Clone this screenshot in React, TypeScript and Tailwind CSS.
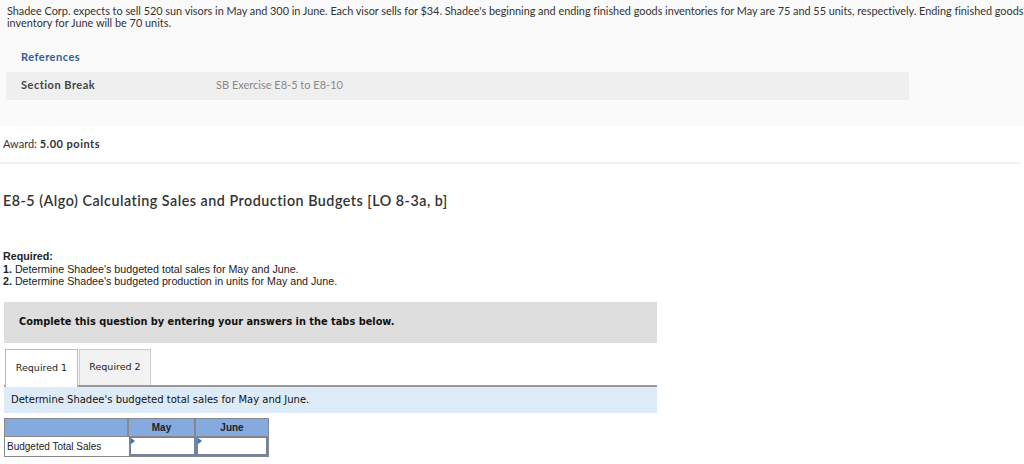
import React from "react";

const proxima = { fontFamily: '"Lato", "Open Sans", sans-serif' };

const CellInput: React.FC = () => (
  <div className="relative h-full w-full border-2 border-t border-[#6f84a8] bg-white">
    <span className="absolute left-0 top-0 h-0 w-0 border-y-[3px] border-l-[4px] border-y-transparent border-l-[#3b6fc4]" />
  </div>
);

export default function App() {
  return (
    <div className="min-h-[464px] w-[1024px] bg-white text-[#333]">
      {/* question stem */}
      <div className="h-[126px] bg-[#fafafa] pt-[5px]" style={proxima}>
        <p className="pl-[7px] text-[10.9px] leading-[12px] whitespace-nowrap tracking-[-0.02px]">
          Shadee Corp. expects to sell 520 sun visors in May and 300 in June. Each visor sells for $34. Shadee's beginning and ending finished goods inventories for May are 75 and 55 units, respectively. Ending finished goods
        </p>
        <p className="pl-[7px] text-[10.9px] leading-[12px]">inventory for June will be 70 units.</p>

        <div className="mt-[20px] pl-[21px] text-[11px] font-bold tracking-[0.5px] text-[#2f5d99]">References</div>

        <div className="ml-[6px] mt-[6px] flex h-[28px] w-[903px] items-center rounded-[3px] bg-[#efefef] text-[11px]">
          <span className="w-[210px] pl-[15px] font-bold tracking-[0.5px] text-[#444]">Section Break</span>
          <span className="text-[#888]">SB Exercise E8-5 to E8-10</span>
        </div>
      </div>

      <div style={proxima}>
        <div className="flex h-[38px] w-[1021px] items-center border-b-2 border-[#f0f0f0] pl-[3px] text-[11px]">
          Award:&nbsp;<b className="tracking-[0.5px]">5.00 points</b>
        </div>

        <h1 className="mt-[26px] pl-[3px] text-[14.3px] font-semibold tracking-[0.5px] text-[#333]">
          E8-5 (Algo) Calculating Sales and Production Budgets [LO 8-3a, b]
        </h1>
      </div>

      <div className="mt-[39px] pl-[3px] text-[10.7px] leading-[12.5px] text-[#222]" style={{ fontFamily: '"Liberation Sans", Arial, sans-serif' }}>
        <div className="font-bold">Required:</div>
        <div><b>1.</b> Determine Shadee's budgeted total sales for May and June.</div>
        <div><b>2.</b> Determine Shadee's budgeted production in units for May and June.</div>
      </div>

      <div className="ml-[4px] w-[653px]" style={{ fontFamily: '"DejaVu Sans", Verdana, sans-serif' }}>
        <div className="mt-[14px] flex h-[41px] items-center bg-[#dedede] pl-[15px] text-[9.8px] font-bold text-[#111]">
          Complete this question by entering your answers in the tabs below.
        </div>

        <div className="mt-[6px] flex items-end border-b-2 border-[#999] pl-[1px]">
          <div className="-mb-[2px] flex h-[38px] w-[73px] items-center justify-center border border-b-0 border-[#bbb] bg-white text-[9.5px] text-[#222]">
            Required 1
          </div>
          <div className="ml-[1px] flex h-[36px] w-[72px] items-center justify-center border border-b-0 border-[#ccc] bg-[#f2f2f2] text-[9.5px] text-[#222]">
            Required 2
          </div>
        </div>

        <div className="flex h-[26px] items-center bg-[#ddeaf7] pl-[7px] text-[10px] text-[#111]">
          Determine Shadee's budgeted total sales for May and June.
        </div>

        <div className="mt-[5px] w-[265px] border border-[#888]" style={{ fontFamily: '"Liberation Sans", Arial, sans-serif' }}>
          <div className="flex h-[17px] bg-[#84aadf] text-[10px] font-bold text-[#222]">
            <div className="w-[124px] border-r-2 border-[#888]" />
            <div className="flex w-[67px] items-center justify-center border-r-2 border-[#888]">May</div>
            <div className="flex flex-1 items-center justify-center">June</div>
          </div>
          <div className="flex h-[20px] border-t border-[#888] text-[10px] text-[#222]">
            <div className="flex w-[124px] items-center pl-[2px]">Budgeted Total Sales</div>
            <div className="w-[67px]"><CellInput /></div>
            <div className="flex-1"><CellInput /></div>
          </div>
        </div>
      </div>
    </div>
  );
}
